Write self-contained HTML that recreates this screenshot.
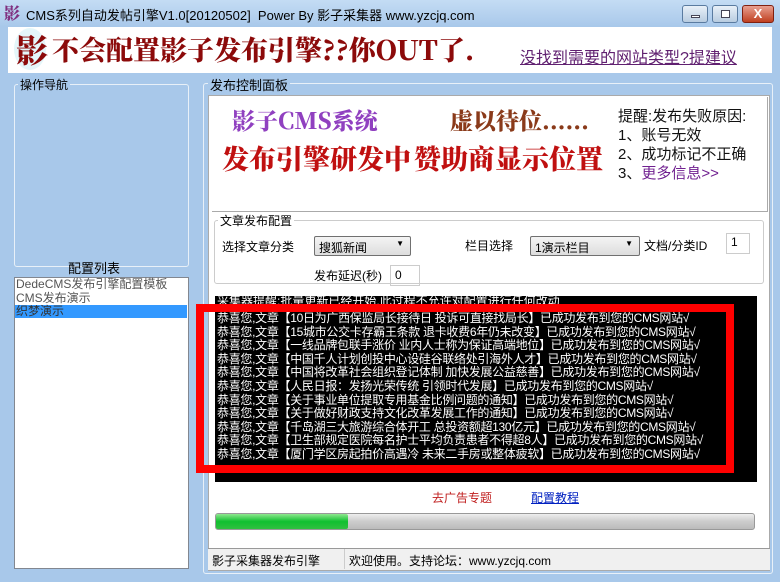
<!DOCTYPE html>
<html><head><meta charset="utf-8"><style>
*{margin:0;padding:0;box-sizing:border-box}
body{width:780px;height:582px;overflow:hidden;background:#a8c8ea;font-family:"Liberation Sans","Noto Sans CJK SC",sans-serif;font-size:12px;position:relative}
.a{position:absolute}
.btn{position:absolute;top:5px;height:18px;border:1px solid #5a7ba0;border-radius:3px;background:linear-gradient(#e8f0f8,#b8cce0)}
.gb{position:absolute;border:1px solid #e8f0f8;border-radius:3px}
.log div{height:13.6px;line-height:13.6px;white-space:nowrap;font-size:12px;letter-spacing:-0.3px}
.brush{font-weight:900;font-family:"Noto Serif CJK SC","Noto Sans CJK SC",serif;white-space:nowrap}
</style></head><body>
<div class="a" style="left:0;top:0;width:780px;height:27px;background:linear-gradient(#c4dcf4,#a8c8ea)"></div>
<div class="a brush" style="left:4px;top:3px;font-size:16px;color:#803080;line-height:20px">影</div>
<div class="a" style="left:26px;top:5px;font-size:13px;color:#000">CMS系列自动发帖引擎V1.0[20120502]&nbsp; Power By 影子采集器 www.yzcjq.com</div>
<div class="btn" style="left:682px;width:26px"><div class="a" style="left:8px;top:9px;width:9px;height:3px;background:#fff;border:1px solid #445"></div></div>
<div class="btn" style="left:712px;width:26px"><div class="a" style="left:8px;top:4px;width:9px;height:8px;border:1px solid #445;background:#fff"></div></div>
<div class="btn" style="left:742px;width:32px;background:linear-gradient(#e8a090,#c04020);border-color:#802010;color:#fff;text-align:center;font-weight:bold;font-size:13px;line-height:16px">X</div>
<div class="a" style="left:8px;top:27px;width:764px;height:46px;background:#fff"></div>
<div class="a" style="left:14px;top:28px;width:32px;height:42px;border-radius:50%;background:#e4f6fa"></div>
<div class="a brush" style="left:16px;top:28px;font-size:32px;line-height:42px;color:#8c0a0a">影</div>
<div class="a brush" style="left:52px;top:33px;font-size:27px;line-height:32px;color:#8c0a0a;letter-spacing:0px">不会配置影子发布引擎??你OUT了.</div>
<div class="a" style="left:520px;top:44px;font-size:16px;color:#602070;text-decoration:underline">没找到需要的网站类型?提建议</div>
<div class="gb" style="left:14px;top:84px;width:175px;height:183px"></div>
<div class="a" style="left:18px;top:76px;background:#a8c8ea;padding:0 2px;font-size:12px">操作导航</div>
<div class="a" style="left:68px;top:258px;font-size:13px">配置列表</div>
<div class="a" style="left:14px;top:277px;width:175px;height:292px;background:#fff;border:1px solid #828790"></div>
<div class="a" style="left:16px;top:278px;line-height:13.5px;color:#555;font-size:12px">DedeCMS发布引擎配置模板<br>CMS发布演示</div>
<div class="a" style="left:15px;top:305px;width:172px;height:13px;background:#3399ff;color:#333;line-height:13px;padding-left:1px">织梦演示</div>
<div class="gb" style="left:203px;top:83px;width:570px;height:491px"></div>
<div class="a" style="left:208px;top:75px;background:#a8c8ea;padding:0 2px;font-size:13px">发布控制面板</div>
<div class="a" style="left:208px;top:95px;width:562px;height:476px;background:#fff;border:1px solid #aaa"></div>
<div class="a" style="left:212px;top:97px;width:556px;height:115px;border-right:1px solid #aaa;border-bottom:1px solid #aaa"></div>
<div class="a brush" style="left:232px;top:103px;font-size:23px;color:#9040c0">影子CMS系统</div>
<div class="a brush" style="left:222px;top:138px;font-size:27px;color:#c01010">发布引擎研发中</div>
<div class="a brush" style="left:450px;top:103px;font-size:23px;color:#8a3a1a">虚以待位......</div>
<div class="a brush" style="left:414px;top:138px;font-size:27px;color:#c01010">赞助商显示位置</div>
<div class="a" style="left:618px;top:107px;font-size:15px;line-height:19px;color:#111">提醒:发布失败原因:<br>1、账号无效<br>2、成功标记不正确<br>3、<span style="color:#702090">更多信息&gt;&gt;</span></div>
<div class="gb" style="left:214px;top:220px;width:550px;height:64px;border-color:#ccc"></div>
<div class="a" style="left:218px;top:212px;background:#fff;padding:0 2px;font-size:12px">文章发布配置</div>
<div class="a" style="left:222px;top:238px;font-size:12px">选择文章分类</div>
<div class="a" style="left:314px;top:236px;width:97px;height:20px;border:1px solid #707070;border-radius:2px;background:linear-gradient(#f4f4f4,#ddd);padding:2px 4px">搜狐新闻<span style="position:absolute;right:6px;top:2px;font-size:8px">▼</span></div>
<div class="a" style="left:465px;top:237px;font-size:12px">栏目选择</div>
<div class="a" style="left:530px;top:236px;width:110px;height:20px;border:1px solid #707070;border-radius:2px;background:linear-gradient(#f4f4f4,#ddd);padding:2px 4px">1演示栏目<span style="position:absolute;right:6px;top:2px;font-size:8px">▼</span></div>
<div class="a" style="left:644px;top:237px;font-size:12px">文档/分类ID</div>
<div class="a" style="left:726px;top:233px;width:24px;height:21px;border:1px solid #ccc;padding:1px 4px">1</div>
<div class="a" style="left:314px;top:267px;font-size:12px">发布延迟(秒)</div>
<div class="a" style="left:390px;top:265px;width:30px;height:21px;border:1px solid #ccc;padding:2px 4px">0</div>
<div class="a" style="left:215px;top:296px;width:542px;height:186px;background:#000;overflow:hidden">
<div class="a" style="left:2px;top:-4px;color:#fff;white-space:nowrap">采集器提醒:批量更新已经开始,此过程不允许对配置进行任何改动</div>
<div class="a log" style="left:2px;top:16px;color:#fff">
<div>恭喜您,文章【10日为广西保监局长接待日 投诉可直接找局长】已成功发布到您的CMS网站√</div>
<div>恭喜您,文章【15城市公交卡存霸王条款 退卡收费6年仍未改变】已成功发布到您的CMS网站√</div>
<div>恭喜您,文章【一线品牌包联手涨价 业内人士称为保证高端地位】已成功发布到您的CMS网站√</div>
<div>恭喜您,文章【中国千人计划创投中心设硅谷联络处引海外人才】已成功发布到您的CMS网站√</div>
<div>恭喜您,文章【中国将改革社会组织登记体制 加快发展公益慈善】已成功发布到您的CMS网站√</div>
<div>恭喜您,文章【人民日报：发扬光荣传统 引领时代发展】已成功发布到您的CMS网站√</div>
<div>恭喜您,文章【关于事业单位提取专用基金比例问题的通知】已成功发布到您的CMS网站√</div>
<div>恭喜您,文章【关于做好财政支持文化改革发展工作的通知】已成功发布到您的CMS网站√</div>
<div>恭喜您,文章【千岛湖三大旅游综合体开工 总投资额超130亿元】已成功发布到您的CMS网站√</div>
<div>恭喜您,文章【卫生部规定医院每名护士平均负责患者不得超8人】已成功发布到您的CMS网站√</div>
<div>恭喜您,文章【厦门学区房起拍价高遇冷 未来二手房或整体疲软】已成功发布到您的CMS网站√</div>
</div></div>
<div class="a" style="left:196px;top:304px;width:538px;height:169px;border:8px solid #f00"></div>
<div class="a" style="left:432px;top:489px;color:#c02020;font-size:12px">去广告专题</div>
<div class="a" style="left:531px;top:489px;color:#0020c0;font-size:12px;text-decoration:underline">配置教程</div>
<div class="a" style="left:215px;top:513px;width:540px;height:17px;border:1px solid #999;border-radius:3px;background:linear-gradient(#eee,#ccc 50%,#bbb)"></div>
<div class="a" style="left:216px;top:514px;width:132px;height:15px;background:linear-gradient(#8fe88f,#10c030 50%,#30c040);border-radius:2px"></div>
<div class="a" style="left:208px;top:548px;width:562px;height:22px;background:#f0f0f0;border-top:1px solid #999"></div>
<div class="a" style="left:212px;top:552px;font-size:12px">影子采集器发布引擎</div>
<div class="a" style="left:344px;top:549px;width:1px;height:20px;background:#ccc"></div>
<div class="a" style="left:349px;top:552px;font-size:12px">欢迎使用。支持论坛：www.yzcjq.com</div>
</body></html>
